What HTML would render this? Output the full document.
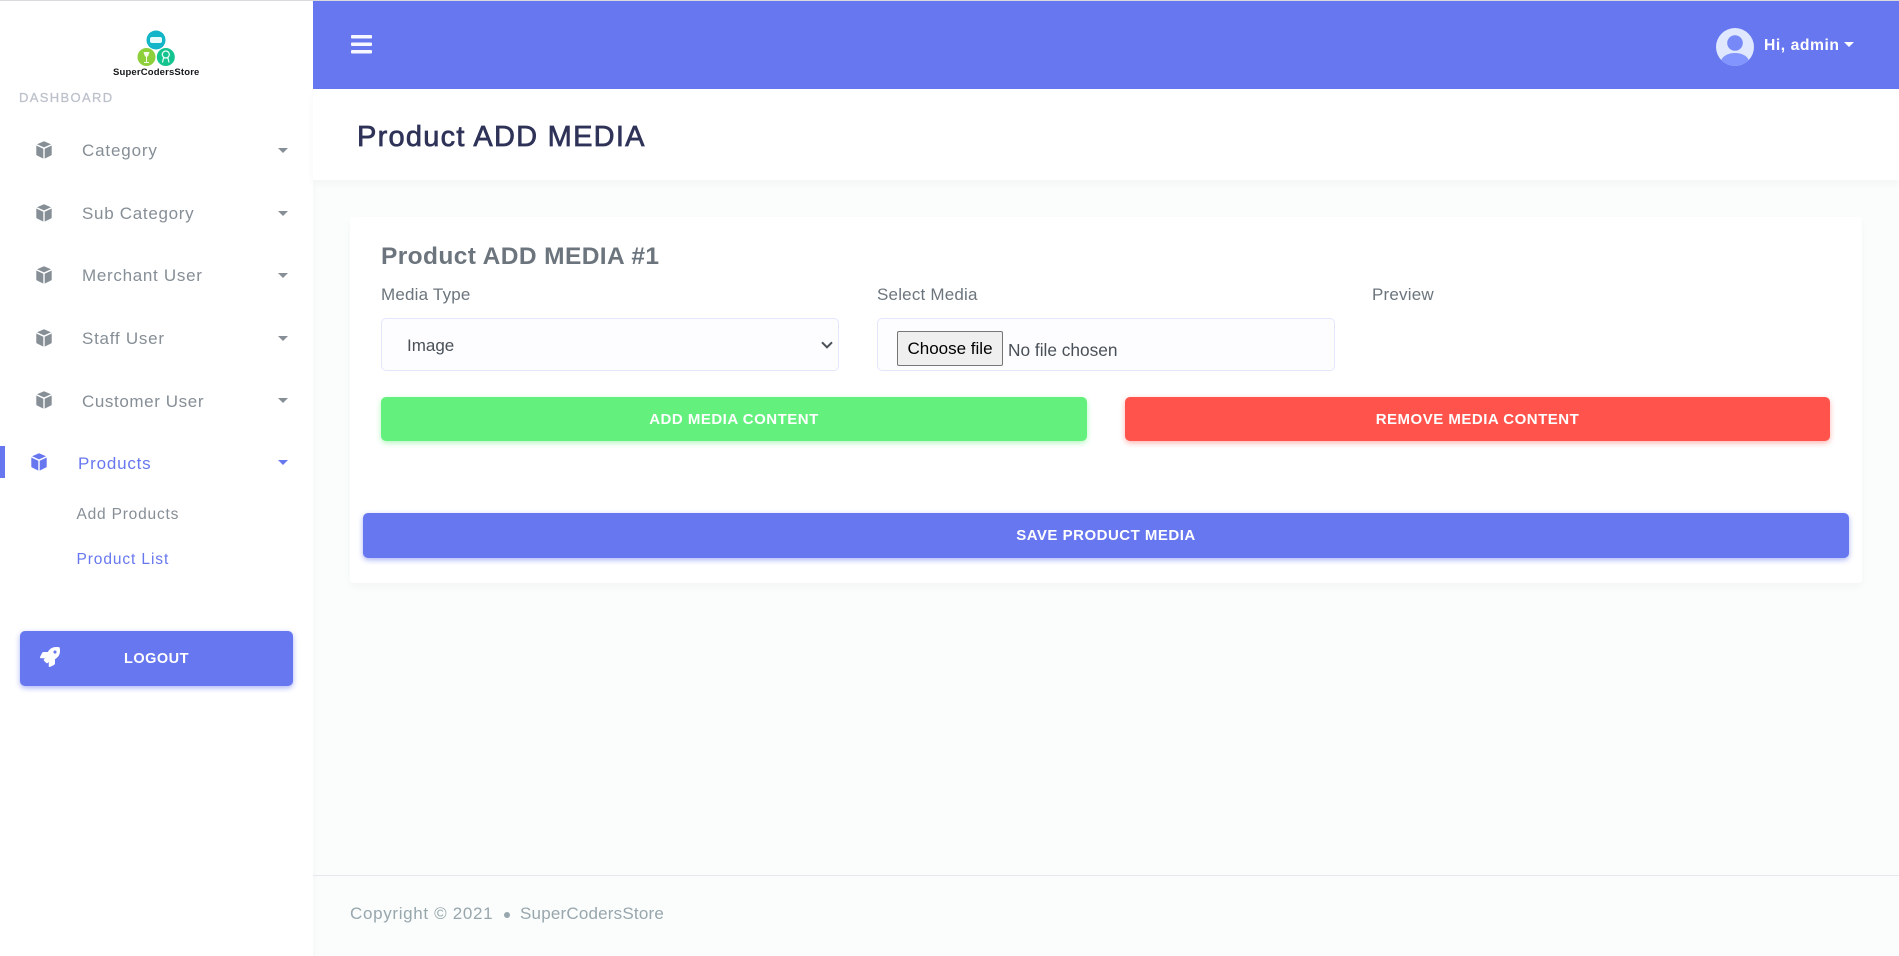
<!DOCTYPE html>
<html lang="en"><head><meta charset="utf-8"><title>Product ADD MEDIA</title>
<style>
html,body{margin:0;padding:0;width:1899px;height:956px;overflow:hidden;background:#fafdfb;font-family:"Liberation Sans",sans-serif}
*{box-sizing:border-box}
.t{position:absolute;white-space:nowrap;line-height:20px;height:20px}
.abs{position:absolute}
#top{left:0;top:0;width:1899px;height:1px;background:#d9d9de;z-index:5}
#side{left:0;top:0;width:313px;height:956px;background:#fff;box-shadow:0 4px 8px rgba(0,0,0,.03)}
#nav{left:313px;top:1px;width:1586px;height:88px;background:#6777ef}
#head{left:313px;top:89px;width:1586px;height:91px;background:#fff;box-shadow:0 4px 8px rgba(0,0,0,.03)}
#card{left:350px;top:217px;width:1512px;height:366px;background:#fff;border-radius:3px;box-shadow:0 4px 8px rgba(0,0,0,.03)}
.m{font-size:17px;color:#868e96}
.car{position:absolute;width:0;height:0;border-left:5px solid transparent;border-right:5px solid transparent;border-top:5px solid #868e96}
.lb{font-size:17px;color:#6c757d;top:285px;letter-spacing:.2px}
.fc{position:absolute;top:318px;width:458px;height:53px;background:#fdfdff;border:1px solid #e4e6fc;border-radius:5px}
.btn{position:absolute;border:0;border-radius:5px;color:#fff;font:bold 15px/20px "Liberation Sans",sans-serif;text-align:center;display:flex;align-items:center;justify-content:center;letter-spacing:.5px}
select{position:absolute;left:381px;top:318px;width:458px;height:53px;background:#fdfdff;border:1px solid #e4e6fc;border-radius:5px;color:#495057;font:17px "Liberation Sans",sans-serif;padding:1px 25px 0;outline:0;appearance:none;-webkit-appearance:none}
</style></head><body>
<div id="top" class="abs"></div>
<aside id="side" class="abs"></aside>
<header id="nav" class="abs"></header>
<div id="head" class="abs"></div>
<div id="card" class="abs"></div>

<!-- logo -->
<svg class="abs" style="left:132px;top:29px" width="48" height="40" viewBox="0 0 48 40">
<circle cx="24" cy="11" r="9.500" fill="#12b6c8"/><circle cx="14.500" cy="28" r="9" fill="#8ed03c"/><circle cx="33.800" cy="28" r="9" fill="#14c48e"/>
<rect x="18" y="8" width="12" height="6" rx="2" fill="#e8fbfd"/>
<path d="M11.500 23h6l-1.500 4.500h-3zM14 27.500h1v6h-1zM12 33h5v1h-5z" fill="#f4fbe8"/>
<circle cx="33.800" cy="25.500" r="3.500" fill="none" stroke="#e8fbf4" stroke-width="1.300"/><path d="M31 29h5.600M31.500 29l-1 4.500M36 29l1 4.500" stroke="#e8fbf4" stroke-width="1.200" fill="none"/>
</svg>
<div class="t" style="left:113px;top:63px;font-size:9.500px;font-weight:bold;color:#15171a;letter-spacing:.16px">SuperCodersStore</div>
<div class="t" style="left:19px;top:88px;font-size:13px;color:#bcc0cb;letter-spacing:1.350px;-webkit-text-stroke:.25px #bcc0cb">DASHBOARD</div>

<!-- menu -->
<svg width="0" height="0" style="position:absolute"><defs><g id="cube">
<path d="M8 .3l7 2.900-7 3.200-7-3.200z"/><path d="M.3 4.500l7 3.200v9.900l-6.500-3.200q-.5-.3-.5-1z"/><path d="M15.700 4.500l-7 3.200v9.900l6.500-3.200q.5-.3.500-1z"/></g></defs></svg>
<svg class="abs" style="left:36px;top:141px" width="16" height="18" fill="#868e96"><use href="#cube"/></svg>
<svg class="abs" style="left:36px;top:204px" width="16" height="18" fill="#868e96"><use href="#cube"/></svg>
<svg class="abs" style="left:36px;top:266px" width="16" height="18" fill="#868e96"><use href="#cube"/></svg>
<svg class="abs" style="left:36px;top:329px" width="16" height="18" fill="#868e96"><use href="#cube"/></svg>
<svg class="abs" style="left:36px;top:391px" width="16" height="18" fill="#868e96"><use href="#cube"/></svg>
<svg class="abs" style="left:31px;top:453px" width="16" height="18" fill="#6777ef"><use href="#cube"/></svg>
<div class="t m" style="left:82px;top:141px;letter-spacing:.85px">Category</div>
<div class="t m" style="left:82px;top:204px;letter-spacing:.7px">Sub Category</div>
<div class="t m" style="left:82px;top:266px;letter-spacing:.7px">Merchant User</div>
<div class="t m" style="left:82px;top:329px;letter-spacing:.75px">Staff User</div>
<div class="t m" style="left:82px;top:392px;letter-spacing:.6px">Customer User</div>
<div class="t m" style="left:78px;top:454px;letter-spacing:.8px;color:#6777ef">Products</div>
<div class="car" style="left:278px;top:148px"></div>
<div class="car" style="left:278px;top:211px"></div>
<div class="car" style="left:278px;top:273px"></div>
<div class="car" style="left:278px;top:336px"></div>
<div class="car" style="left:278px;top:398px"></div>
<div class="car" style="left:278px;top:460px;border-top-color:#6777ef"></div>
<div class="abs" style="left:0;top:446px;width:5px;height:32px;background:#6777ef"></div>
<div class="t" style="left:76.500px;top:505px;font-size:15.500px;color:#868e96;letter-spacing:.8px">Add Products</div>
<div class="t" style="left:76.500px;top:550px;font-size:15.500px;color:#6777ef;letter-spacing:.9px">Product List</div>

<div class="btn" style="left:20px;top:631px;width:273px;height:55px;background:#6777ef;box-shadow:0 2px 6px #acb5f6;font-size:14.500px;letter-spacing:.5px">LOGOUT</div>
<svg class="abs" style="left:40px;top:647px" width="20" height="20" viewBox="0 0 512 512" fill="#fff"><path d="M505.120 19.094c-1.189-5.531-6.658-11-12.207-12.188C460.716 0 435.507 0 410.407 0 307.175 0 245.269 55.203 199.052 128H94.838c-16.348.016-35.557 11.875-42.887 26.484L2.516 253.297A28.400 28.400 0 0 0 0 264a24.009 24.009 0 0 0 24.006 24h103.810l-22.475 22.469c-11.365 11.361-12.996 32.258 0 45.250l50.904 50.906c11.156 11.188 32.156 13.156 45.277 0l22.475-22.469V488a24.009 24.009 0 0 0 24.006 24 28.559 28.559 0 0 0 10.707-2.516l98.728-49.391c14.629-7.297 26.508-26.500 26.508-42.859V312.797c72.598-46.313 128.035-108.406 128.035-211.094.001-25.203.001-50.406-6.954-82.609zM384.040 168a40 40 0 1 1 40.010-40 40.023 40.023 0 0 1-40.010 40z"/></svg>

<!-- navbar -->
<svg class="abs" style="left:351px;top:35px" width="21" height="19" fill="#fff" opacity=".95"><rect y="0" width="21" height="3.500" rx="1"/><rect y="7.500" width="21" height="3.500" rx="1"/><rect y="15" width="21" height="3.500" rx="1"/></svg>
<svg class="abs" style="left:1716px;top:28px" width="38" height="38" viewBox="0 0 38 38">
<defs><clipPath id="av"><circle cx="19" cy="19" r="19"/></clipPath></defs>
<circle cx="19" cy="19" r="19" fill="#dfe8ff"/>
<g clip-path="url(#av)"><circle cx="19" cy="15" r="7.800" fill="#7689f7"/><ellipse cx="19" cy="34" rx="14" ry="9" fill="#8295ff"/></g></svg>
<div class="t" style="left:1764px;top:36px;font-size:15.700px;font-weight:bold;color:#fff;letter-spacing:.55px">Hi, admin</div>
<div class="car" style="left:1844px;top:42px;border-top-color:#fff;border-left-width:5px;border-right-width:5px;border-top-width:5px"></div>

<!-- title -->
<div class="t" style="left:357px;top:125px;height:24px;line-height:24px;font-size:29px;color:#2f3358;letter-spacing:1.250px;-webkit-text-stroke:.7px #2f3358">Product ADD MEDIA</div>

<!-- card -->
<div class="t" style="left:381px;top:247px;font-size:24.500px;font-weight:bold;color:#6c757d;letter-spacing:.4px">Product ADD MEDIA #1</div>
<div class="t lb" style="left:381px">Media Type</div>
<div class="t lb" style="left:877px">Select Media</div>
<div class="t lb" style="left:1372px">Preview</div>
<select><option>Image</option></select>
<svg class="abs" style="left:821px;top:341px" width="12" height="8" viewBox="0 0 12 8"><path d="M1 1.300l5 5 5-5" fill="none" stroke="#495057" stroke-width="2"/></svg>
<div class="fc" style="left:877px"></div>
<button class="abs" style="left:897px;top:331px;width:106px;height:35px;padding:1px 0 0;background:#efefef;border:1px solid #767676;border-radius:2px;color:#000;font:17px 'Liberation Sans',sans-serif">Choose file</button>
<div class="t" style="left:1008px;top:340px;font-size:17.300px;color:#495057">No file chosen</div>

<div class="btn" style="left:381px;top:397px;width:706px;height:44px;padding-top:1px;background:#63f07d;box-shadow:0 2px 6px #b4f6c0">ADD MEDIA CONTENT</div>
<div class="btn" style="left:1125px;top:397px;width:705px;height:44px;padding-top:1px;background:#ff534b;box-shadow:0 2px 6px #fdb4b0">REMOVE MEDIA CONTENT</div>
<div class="btn" style="left:363px;top:513px;width:1486px;height:45px;background:#6777ef;box-shadow:0 2px 6px #acb5f6">SAVE PRODUCT MEDIA</div>

<!-- footer -->
<div class="abs" style="left:313px;top:875px;width:1586px;height:1px;background:#e6e9ef"></div>
<div class="t" style="left:350px;top:904px;font-size:17px;color:#98a6ad;letter-spacing:.67px">Copyright © 2021</div>
<div class="abs" style="left:503.500px;top:911.500px;width:6.500px;height:6.500px;border-radius:50%;background:#98a6ad"></div>
<div class="t" style="left:520px;top:904px;font-size:17px;color:#98a6ad;letter-spacing:.2px">SuperCodersStore</div>
</body></html>
